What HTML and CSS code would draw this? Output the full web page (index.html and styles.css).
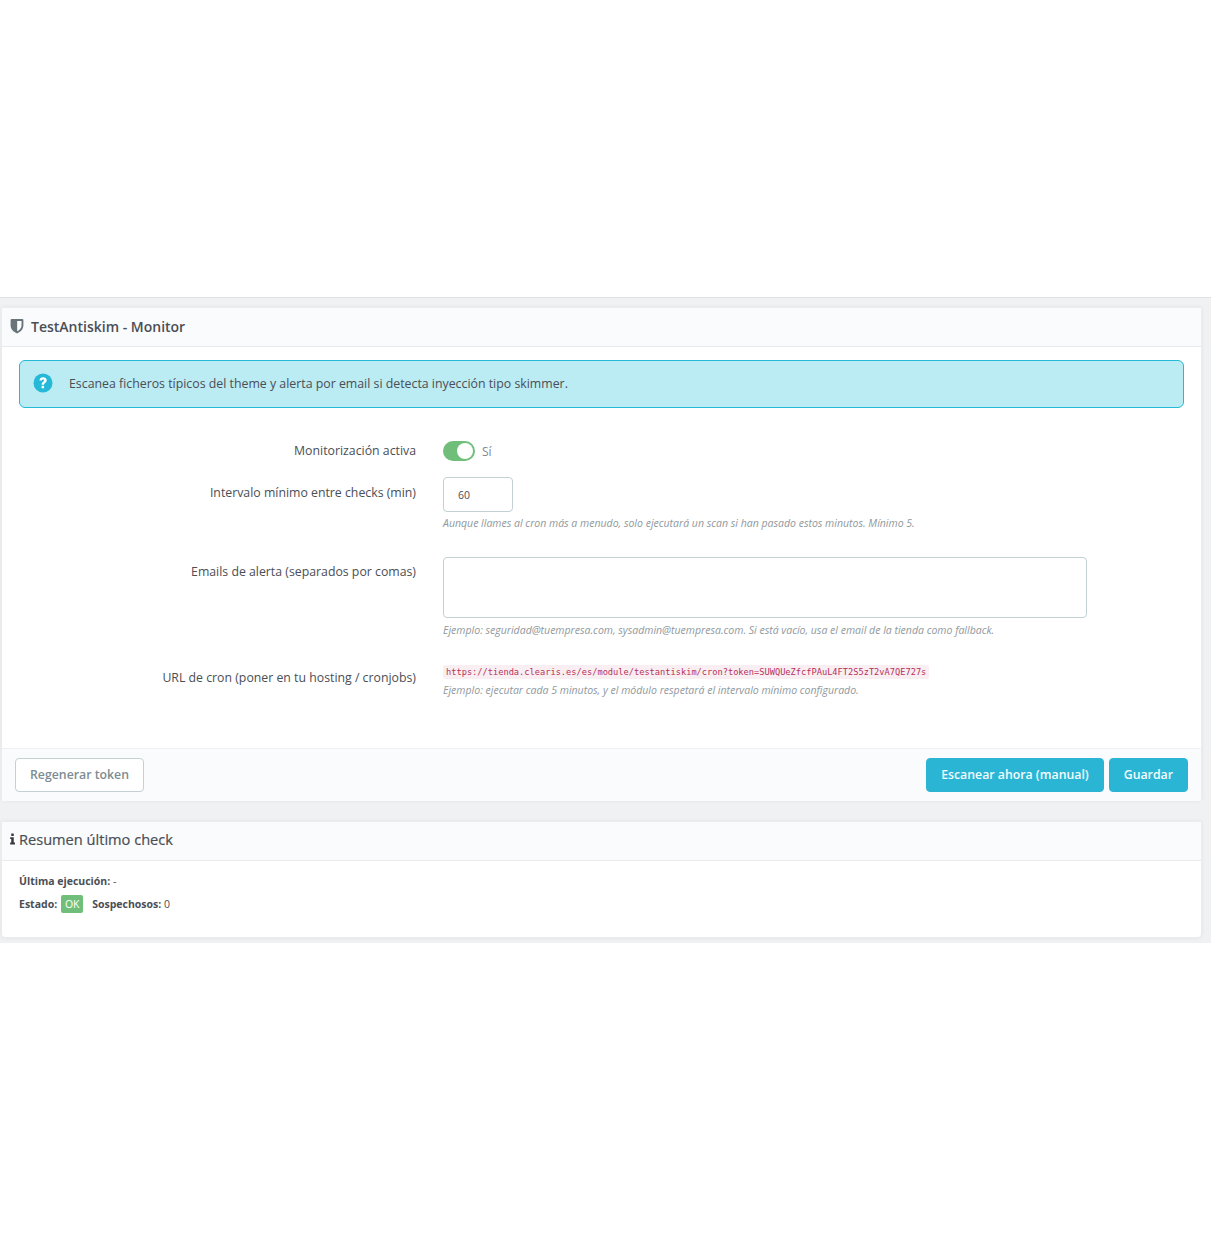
FILE: index.html
```html
<!DOCTYPE html>
<html lang="en">
<head>
    <meta charset="UTF-8">
    <meta name="viewport" content="width=device-width, initial-scale=1.0">
    <title>TestAntiskim - Monitor</title>
    <link rel="stylesheet" href="styles.css">
</head>
<body>
    <div class="page">
        <section class="card">
            <h3 class="card-head">
                <svg class="shield" viewBox="0 0 14 16" width="14" height="16">
                    <path d="M1.500 1h11c.5 0 .9.4.9.9v5.600c0 3.800-2.800 6.300-6.400 8C3.400 13.800.6 11.300.6 7.500V1.900c0-.5.4-.9.9-.9z" fill="#68767c"/>
                    <path d="M7.200 3h4.300v4.600c0 2.600-1.800 4.400-4.300 5.700z" fill="#fff"/>
                </svg>
                TestAntiskim - Monitor
            </h3>
            <div class="card-body">
                <div class="alert">
                    <svg class="alert-icon" viewBox="0 0 20 20" width="20" height="20">
                        <circle cx="10" cy="10" r="9.500" fill="#25b9d7"/>
                        <path d="M6.400 7.600c.1-2.200 1.600-3.400 3.700-3.400 2 0 3.600 1.200 3.600 3.100 0 1.400-.8 2.100-1.600 2.700-.8.600-1.100.9-1.100 1.800H8.600c0-1.500.5-2.200 1.300-2.800.7-.5 1.100-.9 1.100-1.500 0-.7-.4-1.100-1-1.100-.7 0-1.100.5-1.200 1.200z" fill="#fff"/>
                        <rect x="8.600" y="12.800" width="2.500" height="2.500" fill="#fff"/>
                    </svg>
                    <p>Escanea ficheros típicos del theme y alerta por email si detecta inyección tipo skimmer.</p>
                </div>

                <div class="row row-switch">
                    <label class="row-label">Monitorización activa</label>
                    <div class="row-field switch-field">
                        <span class="switch"><span class="knob"></span></span>
                        <span class="switch-text">Sí</span>
                    </div>
                </div>

                <div class="row row-interval">
                    <label class="row-label">Intervalo mínimo entre checks (min)</label>
                    <div class="row-field">
                        <input class="input input-small" type="text" value="60">
                        <p class="help">Aunque llames al cron más a menudo, solo ejecutará un scan si han pasado estos minutos. Mínimo 5.</p>
                    </div>
                </div>

                <div class="row row-emails">
                    <label class="row-label">Emails de alerta (separados por comas)</label>
                    <div class="row-field">
                        <textarea class="input input-area"></textarea>
                        <p class="help">Ejemplo: seguridad@tuempresa.com, sysadmin@tuempresa.com. Si está vacío, usa el email de la tienda como fallback.</p>
                    </div>
                </div>

                <div class="row row-cron">
                    <label class="row-label">URL de cron (poner en tu hosting / cronjobs)</label>
                    <div class="row-field">
                        <code class="cron-url">https://tienda.clearis.es/es/module/testantiskim/cron?token=SUWQUeZfcfPAuL4FT2S5zT2vA7QE727s</code>
                        <p class="help help-cron">Ejemplo: ejecutar cada 5 minutos, y el módulo respetará el intervalo mínimo configurado.</p>
                    </div>
                </div>
            </div>
            <div class="card-foot">
                <button class="btn btn-outline">Regenerar token</button>
                <div class="foot-right">
                    <button class="btn btn-primary">Escanear ahora (manual)</button>
                    <button class="btn btn-primary">Guardar</button>
                </div>
            </div>
        </section>

        <section class="card card-summary">
            <h3 class="card-head head-summary">
                <svg class="info" viewBox="0 0 6 13" width="5" height="12">
                    <path d="M1.500 0h3v2.800h-3zM.2 4.400h4.300v6.400H6V13H.2v-2.200h1.300V6.600H.2z" fill="#363a41"/>
                </svg>
                Resumen último check
            </h3>
            <div class="summary-body">
                <p class="summary-line"><b>Última ejecución:</b> -</p>
                <p class="summary-line line-status"><b>Estado:</b> <span class="badge">OK</span> <b class="suspects">Sospechosos:</b> 0</p>
            </div>
        </section>
    </div>
</body>
</html>
```

FILE: styles.css
```css
* {
    box-sizing: border-box;
}

body {
    margin: 0;
    background-color: #fff;
    font-family: 'Open Sans', sans-serif;
    font-size: 12px;
    color: #4a4e55;
}

.page {
    margin-top: 297px;
    height: 646px;
    padding: 9px 9px 0 1px;
    background-color: #eff1f2;
    border-top: 1px solid #dfe3e5;
}

.card {
    height: 494px;
    background-color: #fff;
    border: 1px solid #e9edef;
    border-radius: 4px;
    box-shadow: 0 0 4px rgba(0, 0, 0, 0.06);
}

.card-summary {
    height: 117px;
    margin-top: 20px;
}

.card-head {
    display: flex;
    align-items: center;
    gap: 7px;
    height: 39px;
    margin: 0;
    padding: 0 0 2px 8px;
    background-color: #fafbfc;
    border-bottom: 1px solid #e8ebed;
    font-size: 14px;
    font-weight: 600;
    color: #4a4e55;
}

.head-summary {
    gap: 4px;
    padding-bottom: 5px;
    font-size: 14.6px;
    font-weight: 400;
    -webkit-text-stroke: 0.2px #4a4e55;
}

.card-body {
    height: 401px;
    padding: 13px 17px 0 17px;
}

.alert {
    display: flex;
    align-items: center;
    height: 48px;
    padding: 0 0 2px 13px;
    background-color: #bbebf3;
    border: 1px solid #25b9d7;
    border-radius: 6px;
}

.alert p {
    margin: 0 0 0 16px;
    font-size: 12.33px;
    color: #4a4e55;
}

.row {
    display: flex;
}

.row-label {
    flex: 0 0 397px;
    text-align: right;
    font-size: 12.3px;
    color: #4a4e55;
}

.row-field {
    margin-left: 27px;
}

.row-switch {
    margin-top: 33px;
    height: 36px;
}

.row-switch .row-label {
    padding-top: 1px;
}

.switch-field {
    display: flex;
    align-items: center;
    gap: 7px;
    height: 20px;
}

.switch {
    display: flex;
    align-items: center;
    justify-content: flex-end;
    width: 32px;
    height: 20px;
    padding-right: 2px;
    background-color: #6fbf7a;
    border-radius: 10px;
}

.knob {
    width: 16px;
    height: 16px;
    background-color: #fff;
    border-radius: 50%;
}

.switch-text {
    color: #7d8c92;
}

.row-interval {
    height: 80px;
}

.row-interval .row-label {
    padding-top: 7px;
}

.input {
    display: block;
    background-color: #fff;
    border: 1px solid #c3d0d4;
    border-radius: 4px;
    font-family: inherit;
    font-size: 10.5px;
    color: #4a4e55;
    outline: none;
}

.input-small {
    width: 70px;
    height: 35px;
    padding: 0 14px;
}

.input-area {
    width: 644px;
    height: 61px;
    resize: none;
}

.help {
    margin: 4px 0 0 0;
    font-size: 10.53px;
    font-style: italic;
    color: #8f989d;
}

.row-emails {
    height: 105px;
}

.row-emails .row-label {
    padding-top: 6px;
}

.row-emails .help {
    margin-top: 5px;
}

.row-cron {
    height: 60px;
}

.row-cron .row-label {
    padding-top: 7px;
}

.cron-url {
    display: inline-block;
    padding: 0 3px;
    height: 14px;
    line-height: 14px;
    background-color: #f9eff2;
    border-radius: 2px;
    font-family: 'DejaVu Sans Mono', monospace;
    font-size: 8.69px;
    color: #b8305a;
}

.help-cron {
    margin-top: 4px;
}

.card-foot {
    display: flex;
    justify-content: space-between;
    align-items: center;
    height: 53px;
    padding: 0 13px 1px 13px;
    background-color: #fafbfc;
    border-top: 1px solid #eef0f2;
}

.foot-right {
    display: flex;
    gap: 5px;
}

.btn {
    height: 34px;
    padding: 0 14px;
    border-radius: 4px;
    font-family: inherit;
    font-size: 12.3px;
    font-weight: 600;
}

.btn-outline {
    background-color: #fff;
    border: 1px solid #c3d0d4;
    color: #7d8c92;
}

.btn-primary {
    background-color: #2bb5d4;
    border: 1px solid #2bb5d4;
    color: #f4fcfe;
}

.summary-body {
    padding: 13px 17px;
}

.summary-line {
    margin: 0;
    font-size: 10.5px;
    color: #4a4e55;
}

.line-status {
    margin-top: 7px;
}

.badge {
    display: inline-block;
    height: 18px;
    line-height: 18px;
    margin-left: 1px;
    padding: 0 4px;
    background-color: #6fbf7a;
    border-radius: 2px;
    color: #fff;
    font-size: 10.5px;
}

.suspects {
    margin-left: 6px;
}
```
